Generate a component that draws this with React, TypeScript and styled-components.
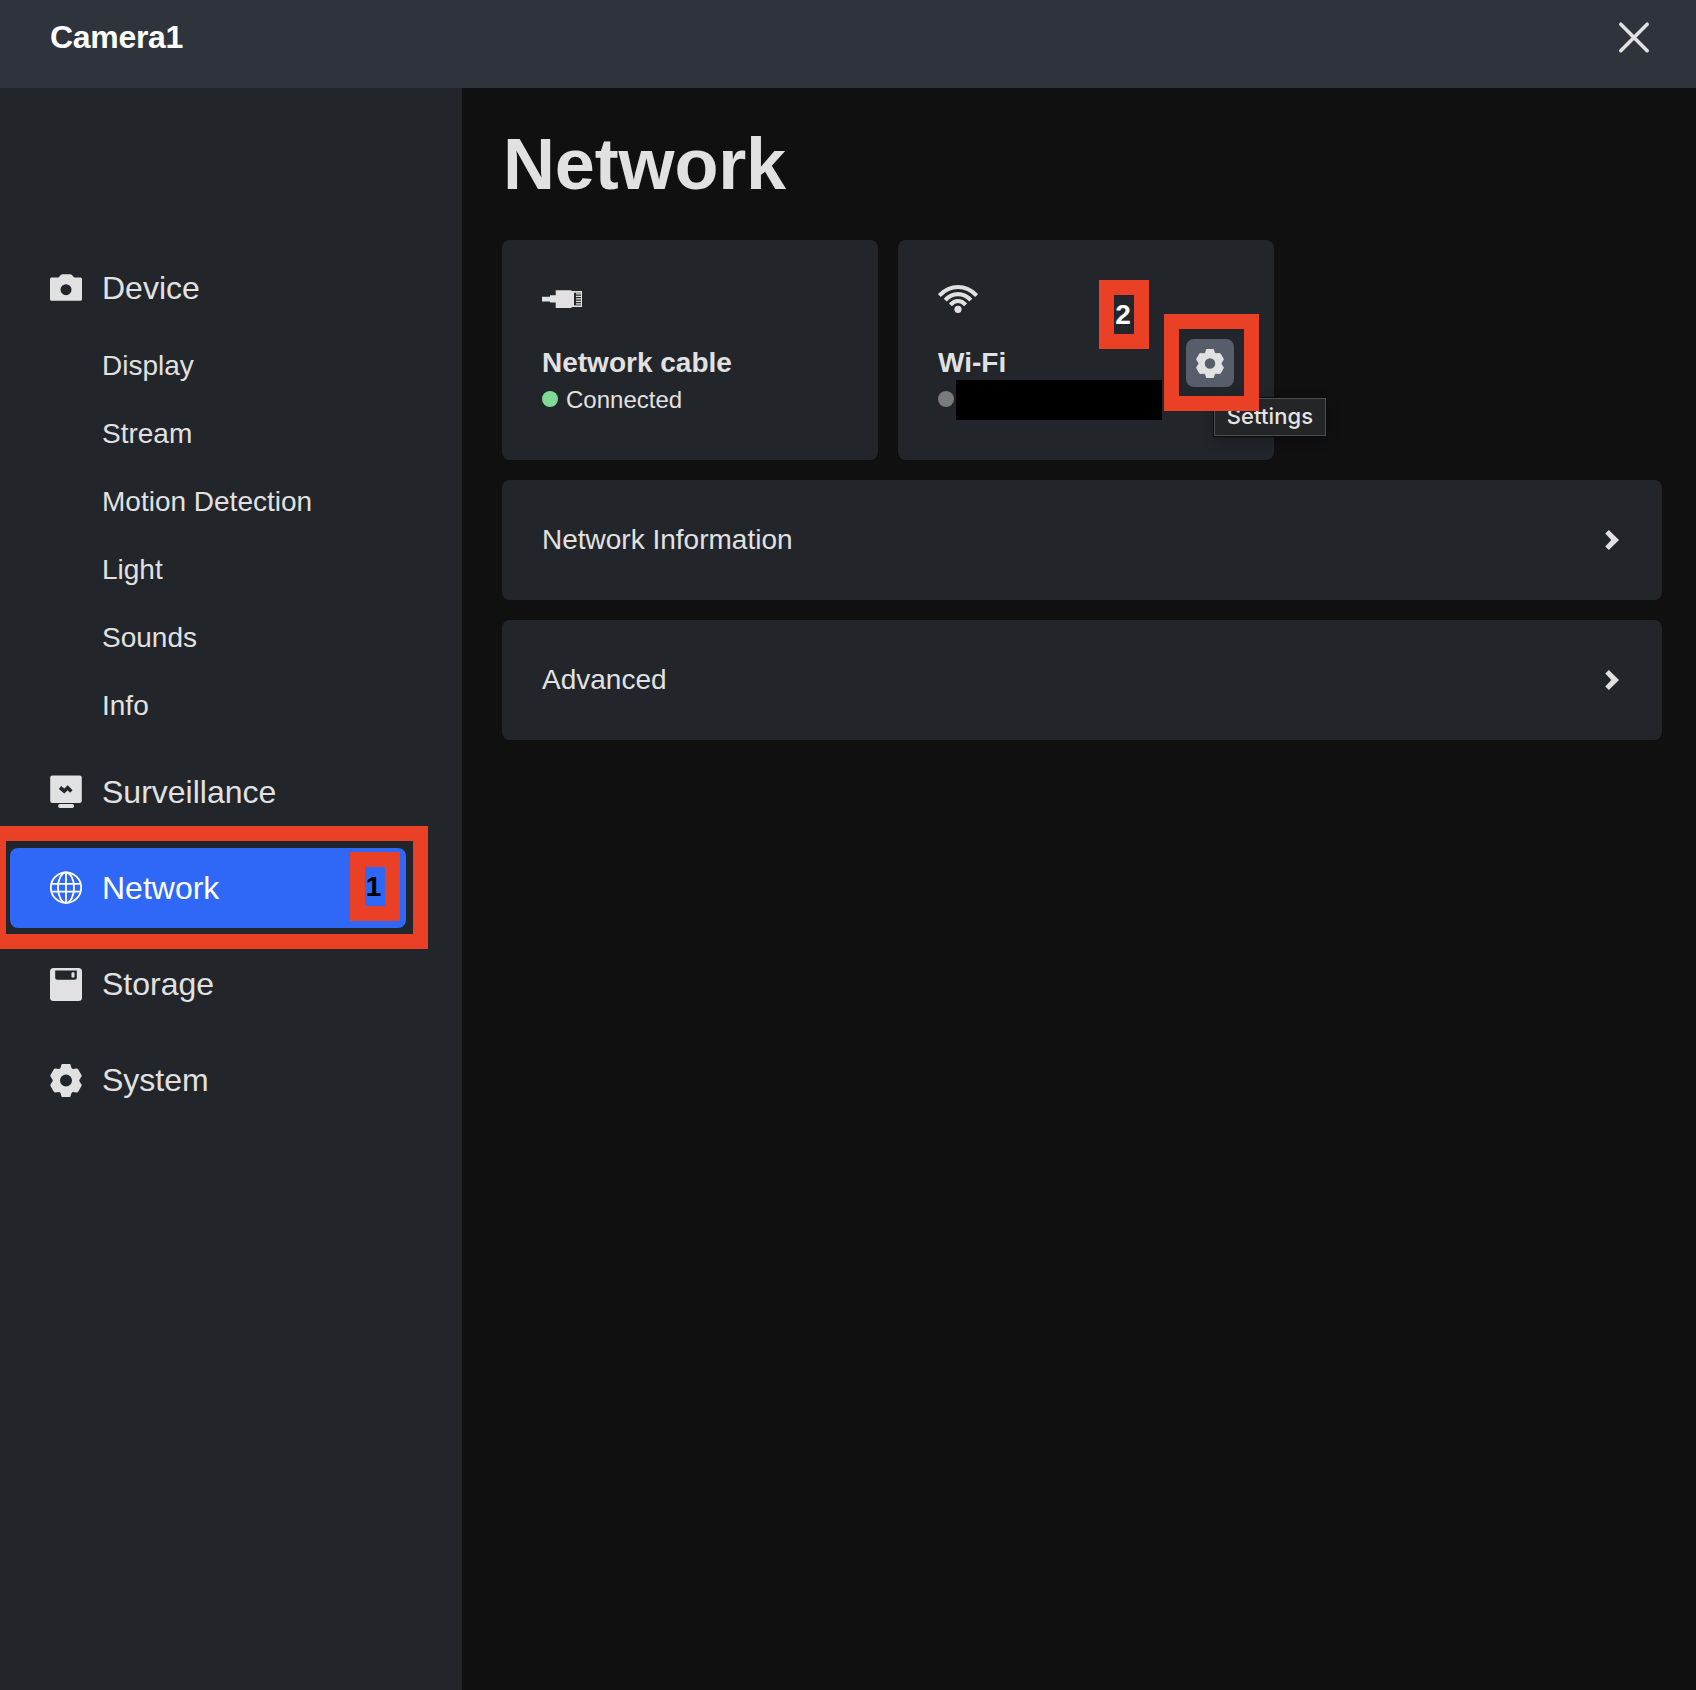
import React from "react";
import styled, { createGlobalStyle, css } from "styled-components";

const Global = createGlobalStyle`
  *, *::before, *::after { box-sizing: border-box; }
  body { margin: 0; background: #101010; }
`;

const fg = "#e1e1e1";
const panel = "#22252a";
const red = "#ea4026";

const Page = styled.div`
  position: relative;
  width: 1696px;
  height: 1690px;
  display: flex;
  flex-direction: column;
  overflow: hidden;
  background: #101010;
  color: ${fg};
  font-family: "Liberation Sans", Arial, sans-serif;
`;

const Header = styled.header`
  flex: none;
  height: 88px;
  padding: 0 45px 14px 50px;
  display: flex;
  align-items: center;
  justify-content: space-between;
  background: #2f333c;
`;

const DeviceName = styled.div`
  font-size: 32px;
  line-height: 40px;
  font-weight: 700;
  letter-spacing: -0.3px;
  color: #fff;
`;

const CloseButton = styled.button`
  width: 34px;
  height: 34px;
  padding: 0;
  border: 0;
  background: none;
  display: flex;
`;

const Body = styled.div`
  flex: 1;
  display: flex;
`;

const Sidebar = styled.nav`
  flex: none;
  width: 462px;
  padding: 160px 56px 0 10px;
  background: ${panel};
`;

const NavItem = styled.a<{ $active?: boolean }>`
  height: 80px;
  margin-bottom: 16px;
  padding-left: 40px;
  display: flex;
  align-items: center;
  gap: 20px;
  border-radius: 8px;
  font-size: 32px;
  line-height: 40px;
  ${(p) => p.$active && css`background: #2f68f6; color: #fff;`}
`;

const SubList = styled.div`
  margin: -12px 0 12px;
`;

const SubItem = styled.a`
  display: flex;
  align-items: center;
  height: 68px;
  padding-left: 92px;
  font-size: 28px;
`;

const Main = styled.main`
  flex: 1;
  padding: 36px 34px 0 40px;
`;

const Title = styled.h1`
  margin: 0 0 36px;
  padding-left: 1px;
  font-size: 72px;
  line-height: 80px;
  font-weight: 700;
  letter-spacing: -0.15px;
`;

const Tiles = styled.div`
  display: flex;
  gap: 20px;
  margin-bottom: 20px;
`;

const Tile = styled.section`
  width: 376px;
  height: 220px;
  padding: 38px 40px 0;
  display: flex;
  justify-content: space-between;
  border-radius: 8px;
  background: ${panel};
`;

const TileText = styled.div`
  display: flex;
  flex-direction: column;
`;

const TileIcon = styled.div`
  height: 40px;
  margin-bottom: 27px;
  display: flex;
`;

const TileName = styled.div`
  font-size: 28px;
  line-height: 36px;
  font-weight: 700;
`;

const Status = styled.div`
  height: 36px;
  display: flex;
  align-items: center;
  gap: 8px;
  font-size: 24px;
  line-height: 28px;
`;

const StatusText = styled.span`
  padding-top: 2px;
`;

const Dot = styled.span<{ $color: string }>`
  width: 16px;
  height: 16px;
  border-radius: 50%;
  background: ${(p) => p.$color};
`;

const GearButton = styled.button`
  width: 48px;
  height: 48px;
  margin: 61px 0 0;
  padding: 0;
  border: 0;
  border-radius: 8px;
  background: #575d6b;
  color: ${fg};
  display: flex;
  align-items: center;
  justify-content: center;
`;

const LinkRow = styled.a`
  height: 120px;
  margin-bottom: 20px;
  padding: 0 43px 0 40px;
  display: flex;
  align-items: center;
  justify-content: space-between;
  border-radius: 8px;
  background: ${panel};
  font-size: 28px;
`;

const Overlay = styled.div<{ $x: number; $y: number; $w: number; $h: number }>`
  position: absolute;
  left: ${(p) => p.$x}px;
  top: ${(p) => p.$y}px;
  width: ${(p) => p.$w}px;
  height: ${(p) => p.$h}px;
`;

const Frame = styled(Overlay)`
  border: 15px solid ${red};
`;

const StepMark = styled(Frame)<{ $color: string }>`
  display: flex;
  align-items: center;
  justify-content: center;
  padding-right: 2px;
  font-size: 28px;
  line-height: 30px;
  font-weight: 700;
  color: ${(p) => p.$color};
`;

const Redaction = styled(Overlay)`
  background: #000;
`;

const Tooltip = styled(Overlay)`
  display: flex;
  align-items: center;
  justify-content: center;
  padding-bottom: 2px;
  border: 1px solid #4e4f50;
  background: #242527;
  box-shadow: 0 0 0 1px #0b0b0b, 0 4px 14px rgba(0, 0, 0, 0.3);
  font-family: Inter, sans-serif;
  font-size: 22px;
  font-weight: 500;
  letter-spacing: 0.1px;
  color: #e4e4e4;
`;

const CameraIcon = () => (
  <svg width="32" height="32" viewBox="0 0 32 32" fill="currentColor">
    <path fillRule="evenodd" d="M1.500 5.500H8.500l2-2.200Q11.500 2.200 12.500 2.200h7.500q1.200 0 2 .9l2.200 2.400h6.300Q32 5.500 32 7v20.300Q32 28.800 30.500 28.800h-29Q0 28.800 0 27.300V7Q0 5.500 1.500 5.500zM16 12.200a5.500 5.500 0 1 0 0 11 5.500 5.500 0 0 0 0-11z" />
  </svg>
);

const MonitorIcon = () => (
  <svg width="32" height="34" viewBox="0 0 32 34" fill="currentColor">
    <rect x="0.200" y="0.400" width="31.600" height="27.500" rx="2.200" />
    <rect x="8.200" y="29" width="15.800" height="4" rx="1.800" />
    <path d="M10 12.500 14.200 16 17.700 12.800 21.300 16.500" fill="none" stroke={panel} strokeWidth="3.600" />
  </svg>
);

const GlobeIcon = () => (
  <svg width="32" height="34" viewBox="0 0 32 34" fill="none" stroke="currentColor" strokeWidth="1.800">
    <circle cx="16" cy="16.700" r="15.200" />
    <ellipse cx="16" cy="16.700" rx="8" ry="15.200" />
    <path d="M16 1.500v30.400M1.300 12.800h29.400M1.300 20.700h29.400" />
  </svg>
);

const StorageIcon = () => (
  <svg width="32" height="33" viewBox="0 0 32 33">
    <rect width="32" height="33" rx="3.500" fill="currentColor" />
    <path d="M5.200 2.500h21.600v7.300q0 2-2 2H7.200q-2 0-2-2z" fill={panel} />
    <rect x="21.500" y="4.300" width="3" height="5.300" rx="1.200" fill="currentColor" />
  </svg>
);

const GearIcon = ({ size }: { size: number }) => (
  <svg width={size} height={size + 1} viewBox="0.800 0.300 30.400 31.400" fill="currentColor">
    <path
      fillRule="evenodd"
      d="M13 0h6q1 0 1.300 1l.9 2.800q.3 1 1.300 1.200l3.700-.3q1 0 1.500.8l3 5.200q.5.900-.1 1.700L28.900 15q-.6 1 0 2l1.700 2.600q.6.800.1 1.700l-3 5.200q-.5.800-1.500.8l-3.700-.3q-1 .2-1.300 1.200l-.9 2.800q-.3 1-1.300 1h-6q-1 0-1.300-1l-.9-2.800q-.3-1-1.300-1.200l-3.700.3q-1 0-1.500-.8l-3-5.200q-.5-.9.100-1.700L3.100 17q.6-1 0-2l-1.700-2.600q-.6-.8-.1-1.700l3-5.200q.5-.8 1.500-.8l3.700.3q1-.2 1.300-1.200l.9-2.800Q12 0 13 0zM16 10.300a5.700 5.700 0 1 0 0 11.400 5.700 5.700 0 0 0 0-11.400z"
    />
  </svg>
);

const CableIcon = () => (
  <svg width="40" height="40" viewBox="0 0 40 40" fill="currentColor">
    <path d="M0 18.800h8v-1.500h5.700V12.200h15.800v.9H40v15.900H29.500v.9H13.700v-5.300H8V23.500H0z" />
    <path d="M32 14.700h7v12.700h-7z" fill={panel} />
    <path d="M34 15.300h5v1.300h-5zm0 2.500h5v1.300h-5zm0 2.500h5v1.300h-5zm0 2.500h5v1.300h-5zm0 2.500h5v1.300h-5z" />
  </svg>
);

const WifiIcon = () => (
  <svg width="40" height="40" viewBox="0 0 40 40" fill="none" stroke="currentColor" strokeWidth="4.100">
    <path d="M1.300 17.500Q9.500 9 20 9T38.700 17.500" />
    <path d="M7.200 22.200Q12.700 16.100 20 16.100t12.800 6.100" />
    <path d="M12.400 26.800Q16 23 20 23t7.600 3.800" />
    <circle cx="20" cy="31.300" r="3.600" fill="currentColor" stroke="none" />
  </svg>
);

const Chevron = () => (
  <svg width="14" height="20" viewBox="0 0 14 20" fill="currentColor">
    <path d="M3.800 0 14 10 3.800 20 .3 16.600 6.300 10 .3 3.400z" />
  </svg>
);

const subItems = ["Display", "Stream", "Motion Detection", "Light", "Sounds", "Info"];

export default function App() {
  return (
    <Page>
      <Global />
      <Header>
        <DeviceName>Camera1</DeviceName>
        <CloseButton aria-label="Close">
          <svg width="34" height="34" viewBox="0 0 34 34" fill="none" stroke={fg} strokeWidth="3.600" strokeLinecap="round">
            <path d="M3.800 4.200 30.200 30.700M30.200 4.200 3.800 30.700" />
          </svg>
        </CloseButton>
      </Header>
      <Body>
        <Sidebar>
          <NavItem><CameraIcon />Device</NavItem>
          <SubList>
            {subItems.map((name) => <SubItem key={name}>{name}</SubItem>)}
          </SubList>
          <NavItem><MonitorIcon />Surveillance</NavItem>
          <NavItem $active><GlobeIcon />Network</NavItem>
          <NavItem><StorageIcon />Storage</NavItem>
          <NavItem><GearIcon size={32} />System</NavItem>
        </Sidebar>
        <Main>
          <Title>Network</Title>
          <Tiles>
            <Tile>
              <TileText>
                <TileIcon><CableIcon /></TileIcon>
                <TileName>Network cable</TileName>
                <Status><Dot $color="#80d995" /><StatusText>Connected</StatusText></Status>
              </TileText>
            </Tile>
            <Tile>
              <TileText>
                <TileIcon><WifiIcon /></TileIcon>
                <TileName>Wi-Fi</TileName>
                <Status><Dot $color="#7b7b7b" /></Status>
              </TileText>
              <GearButton aria-label="Settings"><GearIcon size={28} /></GearButton>
            </Tile>
          </Tiles>
          <LinkRow>Network Information<Chevron /></LinkRow>
          <LinkRow>Advanced<Chevron /></LinkRow>
        </Main>
      </Body>
      <Redaction $x={955.5} $y={379.5} $w={206} $h={40} />
      <Tooltip $x={1214} $y={398} $w={112} $h={38}>Settings</Tooltip>
      <Frame $x={1163.5} $y={313.5} $w={95} $h={97} />
      <StepMark $x={1099} $y={280} $w={50} $h={69} $color="#fff">2</StepMark>
      <Frame $x={-9.500} $y={825.5} $w={437} $h={123} />
      <StepMark $x={349.5} $y={852} $w={50} $h={69} $color="#000">1</StepMark>
    </Page>
  );
}
